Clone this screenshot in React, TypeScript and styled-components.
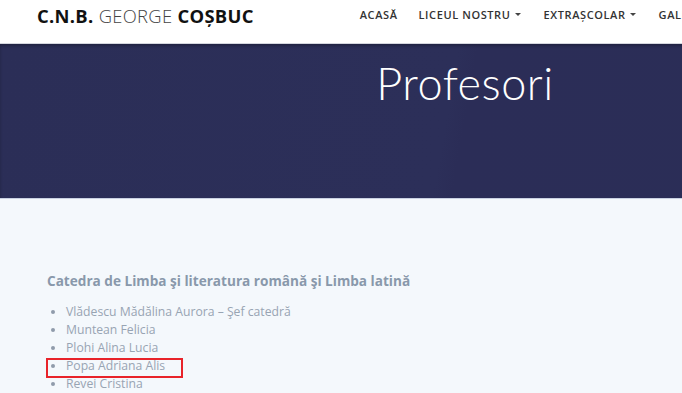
import React from "react";
import styled, { createGlobalStyle } from "styled-components";

const GlobalStyle = createGlobalStyle`
  html, body {
    margin: 0;
    padding: 0;
    overflow: hidden;
    background: #f4f8fc;
    font-family: "Open Sans", "Liberation Sans", sans-serif;
  }
`;

const Page = styled.div`
  width: 930px;
  min-height: 393px;
  background: #f4f8fc;
`;

const Header = styled.header`
  height: 44px;
  background: #fff;
  display: flex;
  align-items: center;
  padding: 0 0 0 37px;
  box-sizing: border-box;
  border-bottom: 1px solid #d4d6de;
`;

const Logo = styled.div`
  font-size: 18.4px;
  color: #111;
  letter-spacing: 0.3px;
  margin-top: -13px;
  white-space: nowrap;

  b {
    font-weight: 700;
  }
  span {
    font-weight: 300;
    color: #444;
  }
`;

const Nav = styled.nav`
  display: flex;
  align-items: center;
  margin: -15px 0 0 96px;
`;

const NavItem = styled.a<{ $caret?: boolean }>`
  font-size: 11px;
  font-weight: 600;
  letter-spacing: 0.6px;
  color: #333;
  text-decoration: none;
  padding: 0 ${(p) => (p.$caret ? "13px" : "11px")} 0 10px;
  display: flex;
  align-items: center;
  white-space: nowrap;
`;

const Caret = styled.i`
  display: inline-block;
  margin-left: 4px;
  border-left: 3px solid transparent;
  border-right: 3px solid transparent;
  border-top: 3px solid #444;
`;

const Hero = styled.section`
  height: 154px;
  background: linear-gradient(100deg, #2b2e57 0%, #2c2f59 48%, #2b2d57 50%, #2b2e57 100%);
  box-shadow: inset 0 2px 3px rgba(0, 0, 0, 0.25);
  border-bottom: 1px solid #c9d1e2;
  display: flex;
  justify-content: center;
`;

const HeroTitle = styled.h1`
  margin: 12px 0 0;
  font-family: Lato, "Open Sans", sans-serif;
  font-weight: 300;
  font-size: 45px;
  color: #fff;
  letter-spacing: 0.5px;
`;

const Content = styled.main`
  padding: 72px 47px 0;
`;

const Heading = styled.h3`
  margin: 0 0 13px;
  font-size: 13.6px;
  font-weight: 700;
  color: #8998ab;
`;

const List = styled.ul`
  margin: 0;
  padding: 0 0 0 19px;
  list-style: disc;
  color: #98a4b3;
  font-size: 12.2px;
  line-height: 18px;
`;

const Item = styled.li<{ $marked?: boolean }>`
  position: relative;

  &::marker {
    color: #8f9bab;
    font-size: 12px;
  }

  ${(p) =>
    p.$marked &&
    `
    &::after {
      content: "";
      position: absolute;
      left: -20px;
      top: 1px;
      width: 133px;
      height: 16px;
      border: 2px solid #e8232a;
    }
  `}
`;

const teachers = [
  "Vlădescu Mădălina Aurora – Şef catedră",
  "Muntean Felicia",
  "Plohi Alina Lucia",
  "Popa Adriana Alis",
  "Revei Cristina",
];

export default function App() {
  return (
    <Page>
      <GlobalStyle />
      <Header>
        <Logo>
          <b>C.N.B.</b> <span>GEORGE</span> <b>COȘBUC</b>
        </Logo>
        <Nav>
          <NavItem href="#">ACASĂ</NavItem>
          <NavItem href="#" $caret>
            LICEUL NOSTRU<Caret />
          </NavItem>
          <NavItem href="#" $caret>
            EXTRAȘCOLAR<Caret />
          </NavItem>
          <NavItem href="#">GALERIE</NavItem>
        </Nav>
      </Header>
      <Hero>
        <HeroTitle>Profesori</HeroTitle>
      </Hero>
      <Content>
        <Heading>Catedra de Limba şi literatura română şi Limba latină</Heading>
        <List>
          {teachers.map((t) => (
            <Item key={t} $marked={t === "Popa Adriana Alis"}>
              {t}
            </Item>
          ))}
        </List>
      </Content>
    </Page>
  );
}
